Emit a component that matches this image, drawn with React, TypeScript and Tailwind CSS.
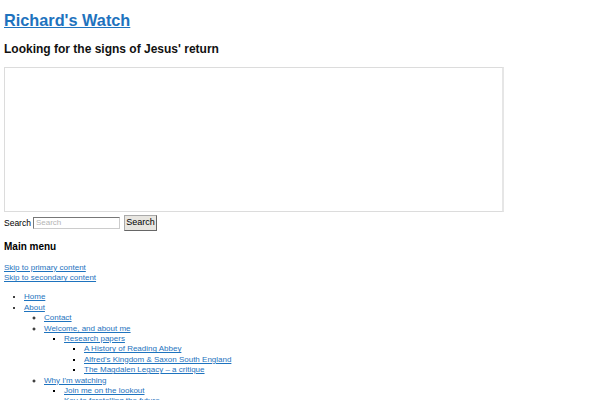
export default function App() {
  const link = "text-[#1e73be] underline";
  return (
    <div className="min-h-[400px] bg-white px-1 text-black" style={{ fontFamily: '"Liberation Sans", Arial, sans-serif' }}>
      <header>
        <h1 className="pt-[10px] text-[16.3px] font-bold leading-[20px]">
          <a href="#" className={link}>Richard's Watch</a>
        </h1>
        <h2 className="mt-[11px] text-[12px] font-bold leading-[16px] text-[#111]">
          Looking for the signs of Jesus' return
        </h2>
      </header>

      {/* header image area */}
      <div className="mt-[10px] h-[145px] w-[500px] border border-[#dcdcdc] border-r-2 border-r-[#e6e6e6]" />

      <form className="mt-[3px] flex h-4 items-center text-[8.5px]" onSubmit={(e) => e.preventDefault()}>
        <label className="mr-[2px]">Search</label>
        <input
          placeholder="Search"
          className="h-[12px] w-[87px] border border-t-[#777] border-l-[#777] border-b-[#ccc] border-r-[#ccc] px-[2px] text-[8px] placeholder:text-[#b5b5b5]"
        />
        <button
          type="button"
          className="ml-[4px] h-4 w-[33px] border border-[#aaa] border-b-[#666] border-r-[#666] bg-[#e8e6e1] text-[9px]"
        >
          Search
        </button>
      </form>

      <nav>
        <h3 className="mt-[10px] text-[10px] font-bold leading-[12px]">Main menu</h3>
        <div className="mt-[10px] text-[8px] leading-[10.4px]">
          <div><a href="#" className={link}>Skip to primary content</a></div>
          <div><a href="#" className={link}>Skip to secondary content</a></div>
        </div>
        <ul className="mt-[8.5px] list-disc pl-5 text-[8px] leading-[10.4px]">
          <li><a href="#" className={link}>Home</a></li>
          <li>
            <a href="#" className={link}>About</a>
            <ul className="list-[circle] pl-5">
              <li><a href="#" className={link}>Contact</a></li>
              <li>
                <a href="#" className={link}>Welcome, and about me</a>
                <ul className="list-[square] pl-5">
                  <li>
                    <a href="#" className={link}>Research papers</a>
                    <ul className="list-[square] pl-5">
                      <li><a href="#" className={link}>A History of Reading Abbey</a></li>
                      <li><a href="#" className={link}>Alfred's Kingdom &amp; Saxon South England</a></li>
                      <li><a href="#" className={link}>The Magdalen Legacy – a critique</a></li>
                    </ul>
                  </li>
                </ul>
              </li>
              <li>
                <a href="#" className={link}>Why I'm watching</a>
                <ul className="list-[square] pl-5">
                  <li><a href="#" className={link}>Join me on the lookout</a></li>
                  <li><a href="#" className={link}>Key to foretelling the future</a></li>
                </ul>
              </li>
            </ul>
          </li>
        </ul>
      </nav>
    </div>
  );
}
